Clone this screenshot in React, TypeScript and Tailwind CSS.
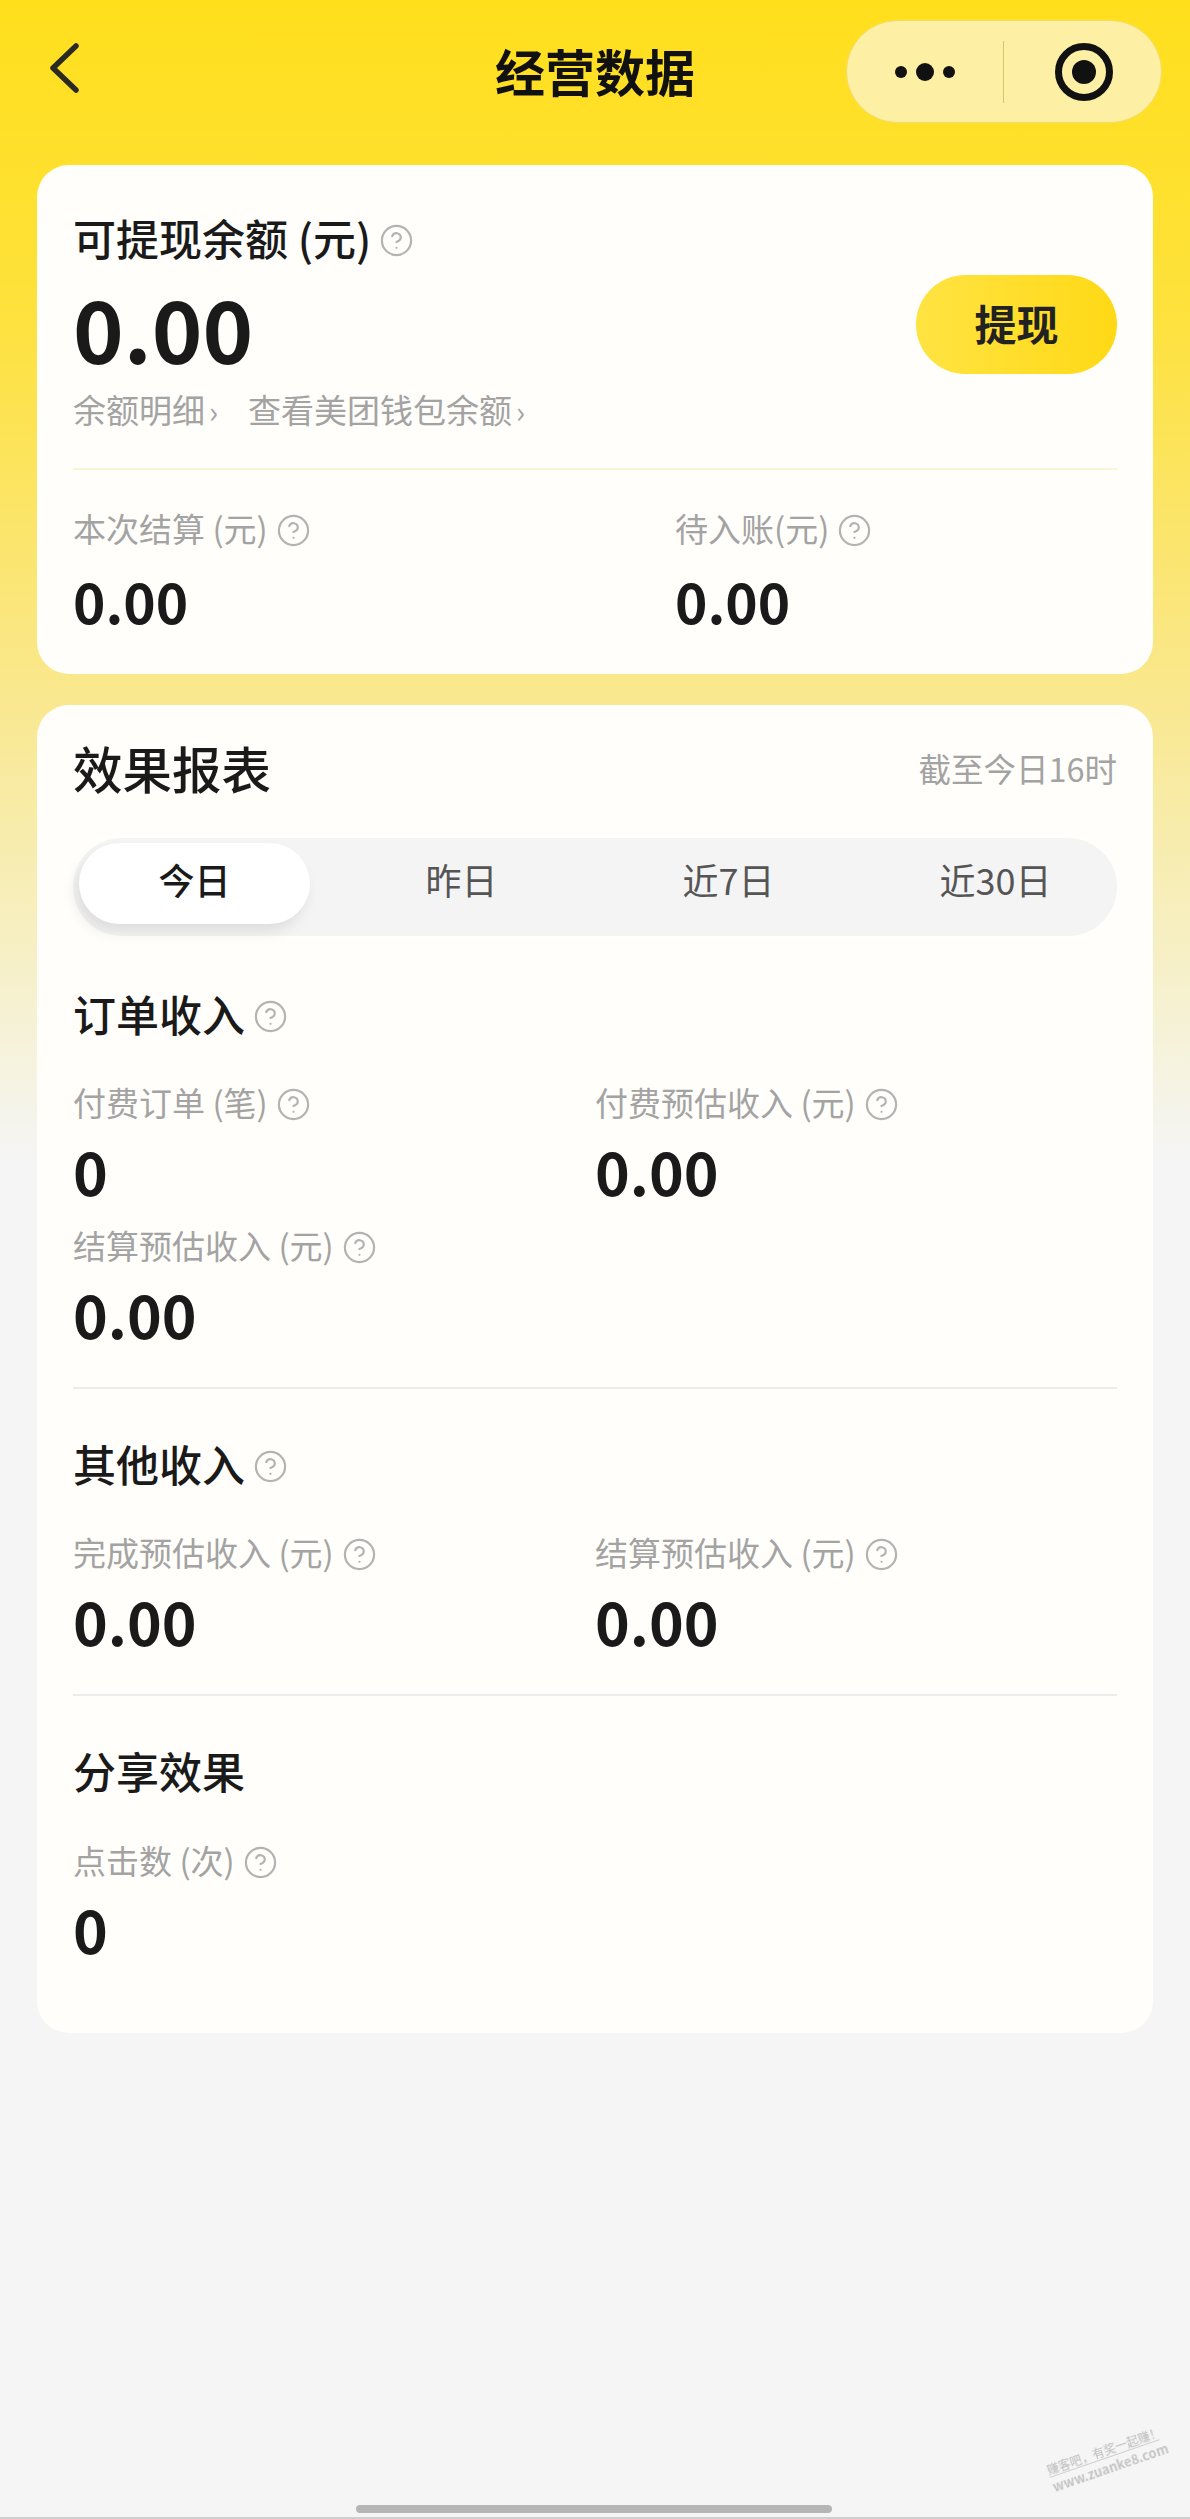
import React from 'react';
import { CircleHelp } from 'lucide-react';

const cjk = { fontFamily: '"Noto Sans CJK SC", "Noto Sans", sans-serif' };

function Help() {
  return <CircleHelp size={35} strokeWidth={1.5} color="#b3b3b3" className="ml-[8px] shrink-0" />;
}

function Metric({ label, value, small = false }: { label: string; value: string; small?: boolean }) {
  return (
    <div>
      <div className="h-[44px] flex items-center text-[33px] text-[#a3a3a3] whitespace-nowrap">
        <span className="pb-[3px]">{label}</span>
        <Help />
      </div>
      <div
        className={small ? 'h-[104px] pb-[8px] flex items-center text-[55px] leading-none font-bold text-[#1a1a1a]' : 'h-[99px] pb-[10px] flex items-center text-[59px] leading-none font-bold text-[#1a1a1a]'}
      >
        {value}
      </div>
    </div>
  );
}

function SectionTitle({ text, help = true }: { text: string; help?: boolean }) {
  return (
    <div className="h-[60px] flex items-center text-[43px] font-medium text-[#1a1a1a]">
      <span className="pb-[5px]">{text}</span>
      {help && <Help />}
    </div>
  );
}

const tabs = ['今日', '昨日', '近7日', '近30日'];

export default function App() {
  return (
    <div
      className="relative w-[1190px] h-[2519px] overflow-hidden bg-[linear-gradient(180deg,#ffdf1c_0px,#fee13a_300px,#f9e88f_700px,#f6f1d0_1000px,#f5f5f5_1160px)]"
      style={cjk}
    >
      <header className="relative h-[165px] flex justify-between pl-[47px] pr-[28px]">
        <svg width="36" height="52" viewBox="0 0 36 52" fill="none" className="mt-[42px]">
          <path d="M29 4 6 26l23 22" stroke="#2a2a20" strokeWidth="5.5" strokeLinecap="round" strokeLinejoin="round" />
        </svg>
        <h1 className="absolute left-0 right-0 top-[35px] text-center text-[50px] leading-[70px] font-bold text-[#111]">经营数据</h1>
        <div className="mt-[20px] w-[316px] h-[103px] rounded-full bg-[#fdf0a5] border border-[#f3dc6c] flex items-center">
          <div className="w-[156px] flex items-center justify-center gap-[9px]">
            <span className="w-[12px] h-[12px] rounded-full bg-[#111]" />
            <span className="w-[18px] h-[18px] rounded-full bg-[#111]" />
            <span className="w-[12px] h-[12px] rounded-full bg-[#111]" />
          </div>
          <div className="w-px h-[62px] bg-[#d9c66c]" />
          <div className="flex-1 flex items-center justify-center">
            <div className="ml-[3px] w-[58px] h-[58px] rounded-full border-[7px] border-[#111] flex items-center justify-center">
              <span className="w-[24px] h-[24px] rounded-full bg-[#111]" />
            </div>
          </div>
        </div>
      </header>

      <main className="px-[37px]">
        <section className="rounded-[32px] bg-[#fffefa] px-[36px] pt-[45px] pb-[18px]">
          <div className="flex justify-between items-center">
            <div>
              <SectionTitle text="可提现余额 (元)" />
              <div className="h-[120px] pb-[6px] flex items-center text-[86px] leading-none font-bold text-[#1a1a1a]">0.00</div>
              <div className="h-[40px] flex items-center text-[33px] text-[#a3a3a3] whitespace-nowrap">
                <span>余额明细</span>
                <span className="ml-[4px] mr-[30px] text-[30px]">›</span>
                <span>查看美团钱包余额</span>
                <span className="ml-[4px] text-[30px]">›</span>
              </div>
            </div>
            <button className="mt-[9px] pb-[4px] w-[201px] h-[99px] rounded-full bg-[linear-gradient(90deg,#ffe342,#ffd916)] text-[42px] font-bold text-[#222]">
              提现
            </button>
          </div>
          <div className="mt-[38px] h-[2px] bg-[#f8f4d4]" />
          <div className="mt-[38px] flex">
            <div className="w-[602px]">
              <Metric label="本次结算 (元)" value="0.00" small />
            </div>
            <Metric label="待入账(元)" value="0.00" small />
          </div>
        </section>

        <section className="mt-[31px] rounded-[32px] bg-[#fffefa] px-[36px] pt-[36px] pb-[50px]">
          <div className="h-[60px] flex items-center justify-between">
            <h2 className="pb-[6px] text-[49.5px] font-medium text-[#1a1a1a]">效果报表</h2>
            <span className="pb-[5px] text-[32.5px] text-[#a3a3a3]">截至今日16时</span>
          </div>

          <div className="mt-[37px] h-[98px] rounded-full bg-[#f4f4f5] px-[6px] flex items-center justify-between">
            {tabs.map((t, i) => (
              <div
                key={t}
                className={
                  i === 0
                    ? 'w-[231px] h-[81px] -mt-[8px] pb-[8px] rounded-full bg-white shadow-[-4px_8px_14px_rgba(0,0,0,0.09)] flex items-center justify-center text-[36px] font-medium text-[#1a1a1a]'
                    : 'w-[231px] h-[81px] -mt-[8px] pb-[8px] flex items-center justify-center text-[36px] text-[#555]'
                }
              >
                {t}
              </div>
            ))}
          </div>

          <div className="mt-[50px]">
            <SectionTitle text="订单收入" />
          </div>
          <div className="mt-[36px] grid grid-cols-[522px_1fr]">
            <Metric label="付费订单 (笔)" value="0" />
            <Metric label="付费预估收入 (元)" value="0.00" />
            <Metric label="结算预估收入 (元)" value="0.00" />
          </div>
          <div className="mt-[19px] h-[2px] bg-[#ececec]" />

          <div className="mt-[47px]">
            <SectionTitle text="其他收入" />
          </div>
          <div className="mt-[36px] grid grid-cols-[522px_1fr]">
            <Metric label="完成预估收入 (元)" value="0.00" />
            <Metric label="结算预估收入 (元)" value="0.00" />
          </div>
          <div className="mt-[19px] h-[2px] bg-[#ececec]" />

          <div className="mt-[47px]">
            <SectionTitle text="分享效果" help={false} />
          </div>
          <div className="mt-[37px]">
            <Metric label="点击数 (次)" value="0" />
          </div>
        </section>
      </main>

      {/* watermark in the corner */}
      <div className="absolute left-[1047px] top-[2444px] w-[116px] -rotate-[19deg] text-center text-[#c4c4c4] blur-[0.4px]">
        <div className="text-[12px] leading-[14px] font-medium border-b border-[#cfcfcf] whitespace-nowrap">赚客吧，有奖一起赚！</div>
        <div className="mt-[2px] text-[13px] leading-[15px] font-bold whitespace-nowrap">www.zuanke8.com</div>
      </div>

      <div className="absolute left-[356px] top-[2505px] w-[476px] h-[8px] rounded-full bg-[#b5b5b5]" />
      <div className="absolute left-0 right-0 bottom-0 h-[2px] bg-[#cfcfcf]" />
    </div>
  );
}
